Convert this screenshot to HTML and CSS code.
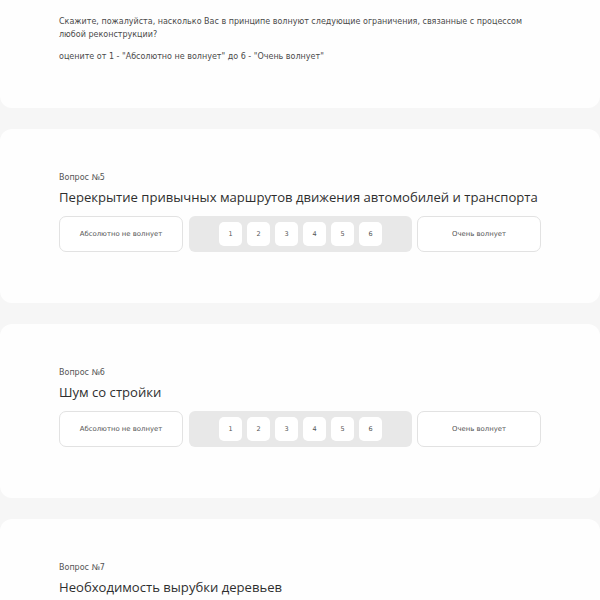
FILE: index.html
```html
<!DOCTYPE html>
<html lang="ru">
<head>
<meta charset="utf-8">
<link rel="stylesheet" href="styles.css">
</head>
<body>
<div class="page">
  <section class="card intro">
    <p class="lead">Скажите, пожалуйста, насколько Вас в принципе волнуют следующие ограничения, связанные с процессом любой реконструкции?</p>
    <p class="lead hint">оцените от 1 - "Абсолютно не волнует" до 6 - "Очень волнует"</p>
  </section>

  <section class="card q">
    <div class="label">Вопрос №5</div>
    <h2 class="title">Перекрытие привычных маршрутов движения автомобилей и транспорта</h2>
    <div class="row">
      <div class="end">Абсолютно не волнует</div>
      <div class="scale">
        <div class="num">1</div><div class="num">2</div><div class="num">3</div><div class="num">4</div><div class="num">5</div><div class="num">6</div>
      </div>
      <div class="end">Очень волнует</div>
    </div>
  </section>

  <section class="card q">
    <div class="label">Вопрос №6</div>
    <h2 class="title">Шум со стройки</h2>
    <div class="row">
      <div class="end">Абсолютно не волнует</div>
      <div class="scale">
        <div class="num">1</div><div class="num">2</div><div class="num">3</div><div class="num">4</div><div class="num">5</div><div class="num">6</div>
      </div>
      <div class="end">Очень волнует</div>
    </div>
  </section>

  <section class="card q">
    <div class="label">Вопрос №7</div>
    <h2 class="title">Необходимость вырубки деревьев</h2>
  </section>
</div>
</body>
</html>
```

FILE: styles.css
```css
html, body {
  margin: 0;
  padding: 0;
  background: #f6f6f6;
}
body {
  font-family: "DejaVu Sans", "Noto Sans", sans-serif;
  color: #3a3a3a;
  overflow: hidden;
}
.page {
  display: flex;
  flex-direction: column;
  gap: 21px;
  margin-top: -20px;
}
.card {
  background: #fefefe;
  border-radius: 12px;
  padding: 0 59px;
  box-sizing: border-box;
}
.intro {
  height: 128px;
  padding-top: 35px;
}
.lead {
  margin: 0;
  font-size: 8px;
  line-height: 13px;
  color: #4a4a4a;
  max-width: 470px;
}
.hint {
  margin-top: 9px;
}
.q {
  height: 174px;
  padding-top: 43px;
}
.label {
  font-size: 8px;
  line-height: 12px;
  color: #555;
}
.title {
  margin: 5px 0 0;
  font-family: "Open Sans", "Noto Sans", sans-serif;
  font-size: 13.1px;
  font-weight: normal;
  line-height: 16px;
  color: #2e2e2e;
  white-space: nowrap;
}
.row {
  display: flex;
  align-items: center;
  margin-top: 11px;
  gap: 6px;
}
.end {
  width: 124px;
  height: 36px;
  box-sizing: border-box;
  border: 1px solid #e2e2e2;
  border-radius: 7px;
  background: #fff;
  display: flex;
  align-items: center;
  justify-content: center;
  font-size: 6.9px;
  color: #555;
}
.scale {
  width: 223px;
  height: 36px;
  background: #e8e8e8;
  border-radius: 6px;
  display: flex;
  align-items: center;
  justify-content: center;
  gap: 5px;
  margin-right: -1px;
}
.num {
  width: 23px;
  height: 24px;
  background: #fff;
  border-radius: 5px;
  display: flex;
  align-items: center;
  justify-content: center;
  font-size: 6.5px;
  color: #555;
}
```
